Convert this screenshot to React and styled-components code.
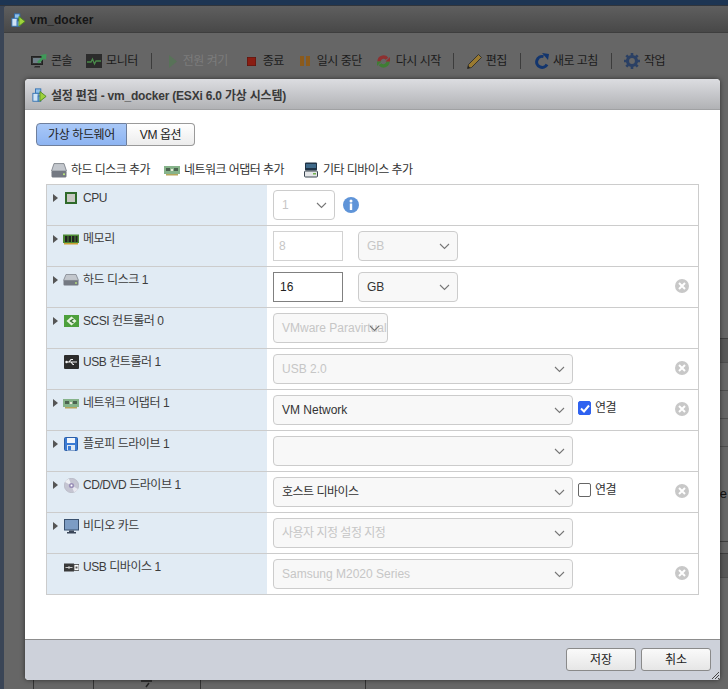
import React from "react";
import styled, { createGlobalStyle } from "styled-components";

const GlobalStyle = createGlobalStyle`
    html, body {
        margin: 0;
        height: 100%;
        background: #3a4556;
        overflow: hidden;
    }
    body {
        font-family: "Liberation Sans", "Noto Sans CJK KR", sans-serif;
        font-size: 12px;
        line-height: 14px;
        color: #333;
    }
`;

const Page = styled.div`
    width: 728px;
    height: 689px;
    position: relative;
    overflow: hidden;
    display: flex;
    flex-direction: column;
    background: #3a4556;
`;

const TopStrip = styled.div`
    height: 6px;
    flex: none;
    background: #1d3553;
    border-bottom: 1px solid #30353c;
    box-sizing: border-box;
`;

const Window = styled.div`
    flex: 1;
    margin-left: 4px;
    background: #666;
    border-radius: 3px 0 0 0;
    display: flex;
    flex-direction: column;
    overflow: hidden;
`;

const WindowHead = styled.div`
    height: 27px;
    flex: none;
    box-sizing: border-box;
    display: flex;
    align-items: center;
    gap: 4px;
    padding: 2px 0 0 7px;
    background: linear-gradient(#5f5f5f, #484848);
    border-bottom: 1px solid #3e3e3e;
    font-size: 12px;
    font-weight: bold;
    color: #151515;
`;

const Toolbar = styled.div`
    height: 56px;
    flex: none;
    display: flex;
    align-items: center;
    padding: 0 0 0 27px;
    letter-spacing: -0.5px;
`;

const ToolItem = styled.div`
    display: flex;
    align-items: center;
    gap: ${(p) => p.$gap || 4}px;
    margin-right: ${(p) => p.$mr || 15}px;
    color: ${(p) => (p.$off ? "#7c7c7c" : "#1c1c1c")};
    white-space: nowrap;
    svg {
        flex: none;
        display: block;
    }
`;

const ToolSep = styled.div`
    width: 1px;
    height: 16px;
    background: #3c3c3c;
    margin-right: ${(p) => p.$mr || 14}px;
`;

const BackPanel = styled.div`
    margin: 249px 0 0 29px;
    display: flex;
    flex-direction: column;
`;

const BackBand = styled.div`
    height: 24px;
    background: #585858;
    border-top: 1px solid #3f3f3f;
    box-sizing: border-box;
`;

const BackRow = styled.div`
    height: ${(p) => p.$h || 28}px;
    box-sizing: border-box;
    border-top: 1px solid #4e4e4e;
    display: flex;
    align-items: center;
    justify-content: flex-end;
    padding-right: 1px;
    color: #111;
    font-size: 13px;
`;

const BackGap = styled.div`
    height: 12px;
    border-top: 1px solid #3f3f3f;
    box-sizing: border-box;
`;

const BackCols = styled.div`
    height: 120px;
    display: grid;
    grid-template-columns: 60px 107px 165px 1fr;
    border-top: 1px solid #4e4e4e;
    box-sizing: border-box;
`;

const BackCol = styled.div`
    border-left: 1px solid #333;
    display: flex;
    justify-content: center;
    padding-top: 102px;
`;

const Dialog = styled.div`
    position: absolute;
    left: 25px;
    top: 79px;
    width: 695px;
    height: 601px;
    box-sizing: border-box;
    border-radius: 4px;
    background: #fff;
    box-shadow: 0 0 5px rgba(0, 0, 0, 0.55);
    display: flex;
    flex-direction: column;
    overflow: hidden;
`;

const DialogHead = styled.div`
    height: 31px;
    flex: none;
    box-sizing: border-box;
    display: flex;
    align-items: center;
    gap: 4px;
    padding: 3px 0 0 7px;
    background: linear-gradient(#dcdde1, #b1b2b5);
    border-bottom: 1px solid #a0a1a3;
    font-size: 12px;
    font-weight: bold;
    letter-spacing: -0.2px;
    color: #3a3a3a;
`;

const DialogBody = styled.div`
    flex: 1;
    padding: 13px 21px 0 21px;
    display: flex;
    flex-direction: column;
    background: #fff;
`;

const Tabs = styled.div`
    display: flex;
    width: 159px;
    height: 23px;
    flex: none;
    margin-left: -10px;
`;

const Tab = styled.div`
    box-sizing: border-box;
    width: ${(p) => p.$w}px;
    display: flex;
    align-items: center;
    justify-content: center;
    border: 1px solid ${(p) => (p.$active ? "#6f7f9c" : "#9a9a9a")};
    border-left-width: ${(p) => (p.$active ? 1 : 0)}px;
    border-radius: ${(p) => (p.$active ? "4px 0 0 4px" : "0 4px 4px 0")};
    background: ${(p) =>
        p.$active
            ? "linear-gradient(#a9c8f7, #8db4f2)"
            : "linear-gradient(#fff, #ececec)"};
    color: #222;
    letter-spacing: -0.4px;
`;

const AddBar = styled.div`
    height: 38px;
    flex: none;
    box-sizing: border-box;
    display: flex;
    align-items: center;
    padding: 10px 0 0 5px;
    letter-spacing: -0.55px;
`;

const AddItem = styled.div`
    display: flex;
    align-items: center;
    gap: ${(p) => p.$gap || 4}px;
    margin-right: ${(p) => p.$mr}px;
    color: #333;
    white-space: nowrap;
`;

const Table = styled.div`
    width: 653px;
    box-sizing: border-box;
    border: 1px solid #ccc;
    flex: none;
`;

const Row = styled.div`
    height: ${(p) => (p.$first ? 40 : 41)}px;
    box-sizing: border-box;
    display: grid;
    grid-template-columns: 220px 1fr;
    border-top: ${(p) => (p.$first ? "0" : "1px solid #ccc")};
`;

const LabelCell = styled.div`
    background: #e1ebf4;
    display: flex;
    align-items: flex-start;
    padding: 6px 0 0 16px;
    height: 100%;
    box-sizing: border-box;
    color: #3c3c3c;
    letter-spacing: -0.45px;
`;

const Caret = styled.span`
    width: 0;
    height: 0;
    flex: none;
    margin: 3px 5px 0 -10px;
    border-left: 5px solid #555;
    border-top: 4px solid transparent;
    border-bottom: 4px solid transparent;
    visibility: ${(p) => (p.$hide ? "hidden" : "visible")};
`;

const IconSlot = styled.span`
    width: 16px;
    height: 14px;
    flex: none;
    margin-right: 4px;
    display: flex;
    align-items: center;
    justify-content: center;
`;

const ControlCell = styled.div`
    display: flex;
    align-items: flex-start;
    padding: 5px 0 0 6px;
    position: relative;
`;

const Select = styled.div`
    box-sizing: border-box;
    width: ${(p) => p.$w}px;
    height: 30px;
    flex: none;
    position: relative;
    display: flex;
    align-items: center;
    padding-left: 8px;
    background: ${(p) => (p.$plain ? "#fff" : "#f8f8f8")};
    border: 1px solid #ccc;
    border-radius: 4px;
    color: ${(p) => (p.$off ? "#c6c6c6" : "#333")};
    letter-spacing: ${(p) => (p.$ko ? "-0.5px" : "0")};
    white-space: nowrap;
    overflow: hidden;
`;

const Chevron = styled.svg`
    position: absolute;
    right: 7px;
    top: 11px;
`;

const TextBox = styled.div`
    box-sizing: border-box;
    width: 70px;
    height: 30px;
    flex: none;
    display: flex;
    align-items: center;
    padding-left: ${(p) => (p.$on ? 6 : 5)}px;
    margin-right: 15px;
    border: 1px solid ${(p) => (p.$on ? "#808080" : "#d2d2d2")};
    color: ${(p) => (p.$on ? "#222" : "#c6c6c6")};
`;

const CheckLabel = styled.label`
    display: flex;
    align-items: center;
    gap: 4px;
    margin: 6px 0 0 5px;
    color: #333;
    letter-spacing: -0.5px;
`;

const CheckBox = styled.span`
    box-sizing: border-box;
    width: 13px;
    height: 14px;
    border-radius: 2px;
    border: 1px solid ${(p) => (p.$on ? "#2f62f0" : "#666")};
    background: ${(p) => (p.$on ? "#2f62f0" : "#fff")};
    display: flex;
    align-items: center;
    justify-content: center;
`;

const RemoveBtn = styled.svg`
    position: absolute;
    right: 9px;
    top: 12px;
`;

const InfoIcon = styled.svg`
    margin: 7px 0 0 8px;
`;

const Footer = styled.div`
    height: 41px;
    flex: none;
    box-sizing: border-box;
    position: relative;
    display: flex;
    justify-content: flex-end;
    gap: 5px;
    padding: 8px 9px 0 0;
    background: #cdd1da;
    border-top: 1px solid #8d8d8d;
`;

const Button = styled.div`
    box-sizing: border-box;
    width: 70px;
    height: 23px;
    display: flex;
    align-items: center;
    justify-content: center;
    border: 1px solid #8a8a8a;
    border-radius: 3px;
    background: linear-gradient(#fafafa, #e6e6e6);
    color: #222;
`;

const Grip = styled.svg`
    position: absolute;
    right: 1px;
    bottom: 1px;
`;

const VmIcon = ({ size = 15 }) => (
    <svg width={size} height={size} viewBox="0 0 17 17">
        <rect x="4" y="1" width="6" height="5" fill="#8fc0ea" stroke="#2f6fb0" />
        <rect x="1" y="6" width="6" height="9" fill="#cfe4f6" stroke="#2f6fb0" />
        <rect x="7" y="9" width="3" height="6" fill="#8fc0ea" stroke="#2f6fb0" />
        <path d="M9 4 L16 9.5 L9 15 Z" fill="#9fd23c" stroke="#4f8a1c" />
    </svg>
);

const ConsoleIcon = () => (
    <svg width="16" height="16" viewBox="0 0 16 16">
        <rect x="0.5" y="3.5" width="11" height="8" fill="#333" stroke="#222" />
        <rect x="2" y="5" width="8" height="5" fill="#6f7f88" />
        <path d="M4 13h5v1.5H3z" fill="#2a2a2a" />
        <path d="M6 9 L11 4 L9 2 L15.5 1 L15 7 L13 5.5 L8 10.5 Z" fill="#3f9a58" />
    </svg>
);

const MonitorIcon = () => (
    <svg width="16" height="14" viewBox="0 0 16 14">
        <rect width="16" height="14" fill="#2b2b2b" />
        <path d="M1 8h4l1.5-3 2 5 1.500-3H15" fill="none" stroke="#4a8a4a" strokeWidth="1.300" />
    </svg>
);

const PlayIcon = () => (
    <svg width="8" height="13" viewBox="0 0 8 13">
        <path d="M0 0 L8 6.500 L0 13 Z" fill="#587258" />
    </svg>
);

const StopIcon = () => (
    <svg width="9" height="9" viewBox="0 0 9 9">
        <rect width="9" height="9" fill="#8a1d12" stroke="#4d1610" />
    </svg>
);

const PauseIcon = () => (
    <svg width="10" height="10" viewBox="0 0 10 10">
        <rect width="4" height="10" fill="#8a5a1c" />
        <rect x="6" width="4" height="10" fill="#8a5a1c" />
    </svg>
);

const RestartIcon = () => (
    <svg width="13" height="13" viewBox="0 0 13 13">
        <path d="M2 6.500 A4.500 4.500 0 0 1 10 3.800" fill="none" stroke="#8e3030" strokeWidth="3.400" />
        <path d="M11 6.500 A4.500 4.500 0 0 1 3 9.200" fill="none" stroke="#3f7d34" strokeWidth="3.400" />
        <path d="M8.500 6.500 L13 6.500 L13 2 Z" fill="#8e3030" />
        <path d="M4.500 6.500 L0 6.500 L0 11 Z" fill="#3f7d34" />
    </svg>
);

const PencilIcon = () => (
    <svg width="15" height="15" viewBox="0 0 15 15">
        <path d="M0.500 14.500 L1.500 10.500 L11.500 0.500 L14.500 3.500 L4.500 13.500 Z" fill="#9a7a30" stroke="#262626" strokeWidth="0.800" />
        <path d="M0.500 14.500 L1.200 11.800 L3.200 13.800 Z" fill="#222" />
    </svg>
);

const RefreshIcon = () => (
    <svg width="16" height="16" viewBox="0 0 16 16">
        <path d="M13 11.500 A5.500 5.500 0 1 1 9.500 3.600" fill="none" stroke="#12356e" strokeWidth="3" />
        <path d="M8 0 L15 1 L14 7 Z" fill="#12356e" />
    </svg>
);

const GearIcon = () => (
    <svg width="16" height="16" viewBox="0 0 16 16">
        <circle cx="8" cy="8" r="4.500" fill="none" stroke="#2b4064" strokeWidth="3.200" />
        <path
            d="M8 0v3M8 13v3M0 8h3M13 8h3M2.300 2.300l2.200 2.200M11.500 11.500l2.200 2.200M2.300 13.700l2.200-2.200M11.500 4.500l2.200-2.200"
            stroke="#2b4064"
            strokeWidth="2.600"
        />
    </svg>
);

const DiskIcon = ({ h = 12 }) => (
    <svg width="16" height={h} viewBox="0 0 16 13" preserveAspectRatio="none">
        <path d="M3 0.500 H13 L15.500 7 H0.500 Z" fill="#c3c7cd" stroke="#7c8088" strokeWidth="0.800" />
        <rect x="0.500" y="7" width="15" height="5.500" rx="1" fill="#747982" />
        <rect x="12" y="9" width="2" height="1.500" fill="#b7e27a" />
    </svg>
);

const NicIcon = ({ muted }) => (
    <svg width="16" height="11" viewBox="0 0 16 11">
        <rect y="1" width="16" height="8" fill={muted ? "#86b38a" : "#4f9a58"} />
        <rect x="2" y="3" width="4" height="3" fill="#4c6350" />
        <rect x="10" y="3" width="4" height="3" fill="#4c6350" />
        <rect x="7" y="4" width="2" height="2" fill="#e8e8d8" />
        <rect x="2" y="9" width="12" height="1.500" fill="#b6a65a" />
    </svg>
);

const DeviceIcon = () => (
    <svg width="14" height="16" viewBox="0 0 14 16">
        <rect x="1" y="0.500" width="12" height="8" rx="1" fill="#1f3346" />
        <rect x="2" y="2" width="10" height="4" fill="#3f6a8a" />
        <rect x="0.500" y="9" width="13" height="6" rx="1" fill="#e4e6e8" stroke="#3b4650" />
        <rect x="9" y="11" width="3" height="1.500" fill="#6fb04a" />
    </svg>
);

const CpuIcon = () => (
    <svg width="12" height="12" viewBox="0 0 12 12">
        <rect width="12" height="12" fill="#2f6a2a" />
        <rect x="2" y="2" width="8" height="8" fill="#c9c9c4" />
    </svg>
);

const MemIcon = () => (
    <svg width="16" height="11" viewBox="0 0 16 11">
        <rect y="0.500" width="16" height="8.500" fill="#4c8a34" />
        <rect x="2" y="2" width="2.500" height="6" fill="#222" />
        <rect x="5.500" y="2" width="2.500" height="6" fill="#222" />
        <rect x="9" y="2" width="2.500" height="6" fill="#222" />
        <rect x="12.500" y="2" width="2" height="6" fill="#222" />
        <rect x="1" y="9" width="14" height="1.500" fill="#c9a030" />
    </svg>
);

const ScsiIcon = () => (
    <svg width="15" height="12" viewBox="0 0 15 12">
        <rect width="15" height="12" fill="#4da03c" />
        <path d="M7.500 1.500 L12.500 6 L7.500 10.500 L2.500 6 Z" fill="#e8f4e0" />
        <path d="M9.500 4 L6.500 6 L9.500 8" fill="none" stroke="#2f6a2a" strokeWidth="1.300" />
    </svg>
);

const UsbIcon = () => (
    <svg width="15" height="14" viewBox="0 0 15 14">
        <rect width="15" height="14" rx="1" fill="#2c2c2c" />
        <path d="M2 7h11M5 7l2-2.500h2M7 7l2 2.500h1" fill="none" stroke="#f2f2f2" strokeWidth="1.100" />
        <circle cx="2.500" cy="7" r="1.200" fill="#f2f2f2" />
    </svg>
);

const FloppyIcon = () => (
    <svg width="14" height="14" viewBox="0 0 14 14">
        <rect x="0.500" y="0.500" width="13" height="13" rx="1" fill="#3b7bd4" stroke="#2b5ea8" />
        <rect x="3" y="1" width="8" height="5" fill="#f2f6fb" />
        <rect x="3" y="8" width="8" height="5.500" fill="#dfe8f2" />
        <rect x="4" y="9" width="3" height="4" fill="#3b7bd4" />
    </svg>
);

const DiscIcon = () => (
    <svg width="15" height="15" viewBox="0 0 15 15">
        <circle cx="7.500" cy="7.500" r="7.200" fill="#c5c5d2" stroke="#a8a8b4" strokeWidth="0.500" />
        <path d="M7.500 7.500 L1 4 A7.200 7.200 0 0 1 5 0.700 Z" fill="#eef0f4" />
        <path d="M7.500 7.500 L14 11 A7.200 7.200 0 0 1 10 14.300 Z" fill="#e8e8f0" />
        <circle cx="7.500" cy="7.500" r="2.600" fill="#9a8fb8" />
        <circle cx="7.500" cy="7.500" r="1" fill="#fff" />
    </svg>
);

const ScreenIcon = () => (
    <svg width="15" height="15" viewBox="0 0 15 15">
        <rect x="0.500" y="0.500" width="14" height="10.500" fill="#7c9cc4" stroke="#39506e" />
        <path d="M5 11.500h5v1.500h2v1.500H3V13h2z" fill="#3a4658" />
    </svg>
);

const UsbDeviceIcon = () => (
    <svg width="15" height="9" viewBox="0 0 15 9">
        <rect y="0.500" width="10" height="8" fill="#3a3a3a" />
        <path d="M1.500 4.500h7M4 4.500l1.500-1.500M4 4.500l1.500 1.500" stroke="#ddd" strokeWidth="0.900" fill="none" />
        <rect x="10" y="1.500" width="5" height="6" fill="#fff" stroke="#444" strokeWidth="0.800" />
        <rect x="11.500" y="3.500" width="2" height="2" fill="#555" />
    </svg>
);

const ChevronIcon = () => (
    <Chevron width="11" height="7" viewBox="0 0 11 7">
        <path d="M1 1 L5.500 5.500 L10 1" fill="none" stroke="#777" strokeWidth="1.100" />
    </Chevron>
);

const RemoveIcon = () => (
    <RemoveBtn width="14" height="14" viewBox="0 0 14 14">
        <circle cx="7" cy="7" r="7" fill="#c8c8c8" />
        <path d="M4 4 L10 10 M10 4 L4 10" stroke="#fff" strokeWidth="2" />
    </RemoveBtn>
);

const rows = [
    { label: "CPU", icon: <CpuIcon />, kind: "cpu" },
    { label: "메모리", icon: <MemIcon />, kind: "size", on: false, value: "8" },
    { label: "하드 디스크 1", icon: <DiskIcon />, kind: "size", on: true, value: "16", remove: true },
    { label: "SCSI 컨트롤러 0", icon: <ScsiIcon />, kind: "scsi", value: "VMware Paravirtual" },
    { label: "USB 컨트롤러 1", icon: <UsbIcon />, leaf: true, value: "USB 2.0", off: true, remove: true },
    { label: "네트워크 어댑터 1", icon: <NicIcon muted />, value: "VM Network", check: true, checked: true, remove: true },
    { label: "플로피 드라이브 1", icon: <FloppyIcon />, value: "" },
    { label: "CD/DVD 드라이브 1", icon: <DiscIcon />, value: "호스트 디바이스", ko: true, check: true, remove: true },
    { label: "비디오 카드", icon: <ScreenIcon />, value: "사용자 지정 설정 지정", ko: true, off: true },
    { label: "USB 디바이스 1", icon: <UsbDeviceIcon />, leaf: true, value: "Samsung M2020 Series", off: true, remove: true },
];

const RowControls = ({ row }) => {
    if (row.kind === "cpu") {
        return (
            <>
                <Select $w={62} $plain $off>
                    1
                    <ChevronIcon />
                </Select>
                <InfoIcon width="16" height="16" viewBox="0 0 16 16">
                    <circle cx="8" cy="8" r="8" fill="#5f94d8" />
                    <circle cx="8" cy="4" r="1.500" fill="#fff" />
                    <rect x="6.800" y="6.500" width="2.400" height="6.500" fill="#fff" />
                </InfoIcon>
            </>
        );
    }
    if (row.kind === "size") {
        return (
            <>
                <TextBox $on={row.on}>{row.value}</TextBox>
                <Select $w={100} $off={!row.on}>
                    GB
                    <ChevronIcon />
                </Select>
            </>
        );
    }
    if (row.kind === "scsi") {
        return (
            <Select $w={115} $off>
                {row.value}
                <ChevronIcon />
            </Select>
        );
    }
    return (
        <>
            <Select $w={300} $off={row.off} $ko={row.ko}>
                {row.value}
                <ChevronIcon />
            </Select>
            {row.check && (
                <CheckLabel>
                    <CheckBox $on={row.checked}>
                        {row.checked && (
                            <svg width="10" height="9" viewBox="0 0 10 9">
                                <path d="M1 4.500 L4 7.500 L9 1.500" fill="none" stroke="#fff" strokeWidth="2" />
                            </svg>
                        )}
                    </CheckBox>
                    연결
                </CheckLabel>
            )}
        </>
    );
};

export default function App() {
    return (
        <Page>
            <GlobalStyle />
            <TopStrip />
            <Window>
                <WindowHead>
                    <VmIcon />
                    vm_docker
                </WindowHead>
                <Toolbar>
                    <ToolItem $mr={14}><ConsoleIcon />콘솔</ToolItem>
                    <ToolItem $mr={13}><MonitorIcon />모니터</ToolItem>
                    <ToolSep $mr={17} />
                    <ToolItem $off $gap={6} $mr={19}><PlayIcon />전원 켜기</ToolItem>
                    <ToolItem $gap={7} $mr={16}><StopIcon />종료</ToolItem>
                    <ToolItem $gap={7} $mr={15}><PauseIcon />일시 중단</ToolItem>
                    <ToolItem $gap={6} $mr={12}><RestartIcon />다시 시작</ToolItem>
                    <ToolSep $mr={13} />
                    <ToolItem $gap={4} $mr={13}><PencilIcon />편집</ToolItem>
                    <ToolSep $mr={13} />
                    <ToolItem $gap={3} $mr={13}><RefreshIcon />새로 고침</ToolItem>
                    <ToolSep $mr={12} />
                    <ToolItem><GearIcon />작업</ToolItem>
                </Toolbar>
                <BackPanel>
                    <BackBand />
                    <BackRow />
                    <BackRow />
                    <BackRow />
                    <BackRow $h={95}>e</BackRow>
                    <BackGap />
                    <BackBand />
                    <BackCols>
                        <BackCol />
                        <BackCol>
                            <svg width="12" height="8" viewBox="0 0 12 8">
                                <path d="M0 1h11M5 7l3-4" stroke="#222" strokeWidth="1.500" />
                            </svg>
                        </BackCol>
                        <BackCol />
                        <BackCol />
                    </BackCols>
                </BackPanel>
            </Window>
            <Dialog>
                <DialogHead>
                    <VmIcon />
                    설정 편집 - vm_docker (ESXi 6.0 가상 시스템)
                </DialogHead>
                <DialogBody>
                    <Tabs>
                        <Tab $active $w={91}>가상 하드웨어</Tab>
                        <Tab $w={68}>VM 옵션</Tab>
                    </Tabs>
                    <AddBar>
                        <AddItem $mr={14}><DiskIcon h={15} />하드 디스크 추가</AddItem>
                        <AddItem $mr={20}><NicIcon muted />네트워크 어댑터 추가</AddItem>
                        <AddItem $mr={0} $gap={5}><DeviceIcon />기타 디바이스 추가</AddItem>
                    </AddBar>
                    <Table>
                        {rows.map((row, i) => (
                            <Row key={row.label} $first={i === 0}>
                                <LabelCell>
                                    <Caret $hide={row.leaf} />
                                    <IconSlot>{row.icon}</IconSlot>
                                    {row.label}
                                </LabelCell>
                                <ControlCell>
                                    <RowControls row={row} />
                                    {row.remove && <RemoveIcon />}
                                </ControlCell>
                            </Row>
                        ))}
                    </Table>
                </DialogBody>
                <Footer>
                    <Button>저장</Button>
                    <Button>취소</Button>
                    <Grip width="7" height="7" viewBox="0 0 7 7">
                        <path d="M0 7 L7 0 M3 7 L7 3 M6 7 L7 6" stroke="#444" strokeWidth="1" />
                    </Grip>
                </Footer>
            </Dialog>
        </Page>
    );
}
